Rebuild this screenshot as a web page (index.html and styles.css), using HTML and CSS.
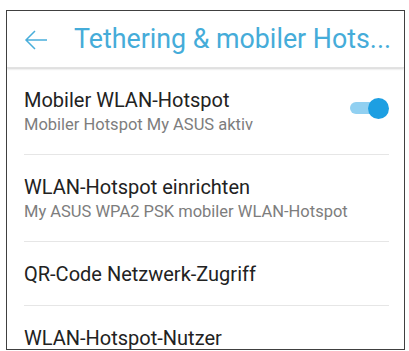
FILE: index.html
```html
<!DOCTYPE html>
<html>
<head>
<meta charset="utf-8">
<link rel="stylesheet" href="styles.css">
</head>
<body>
<div class="frame">
  <header class="appbar">
    <svg class="back" width="24" height="22" viewBox="0 0 24 22">
      <path d="M23 11H2M11 2L2 11L11 20" fill="none" stroke="#49aedb" stroke-width="1.5"/>
    </svg>
    <span class="title">Tethering &amp; mobiler Hots...</span>
  </header>
  <ul class="list">
    <li class="item">
      <div class="texts">
        <div class="primary">Mobiler WLAN-Hotspot</div>
        <div class="secondary">Mobiler Hotspot My ASUS aktiv</div>
      </div>
      <div class="switch"><span class="track"></span><span class="thumb"></span></div>
    </li>
    <li class="item">
      <div class="texts">
        <div class="primary">WLAN-Hotspot einrichten</div>
        <div class="secondary">My ASUS WPA2 PSK mobiler WLAN-Hotspot</div>
      </div>
    </li>
    <li class="item">
      <div class="texts">
        <div class="primary">QR-Code Netzwerk-Zugriff</div>
      </div>
    </li>
    <li class="item">
      <div class="texts">
        <div class="primary">WLAN-Hotspot-Nutzer</div>
      </div>
    </li>
  </ul>
</div>
</body>
</html>
```
FILE: styles.css
```css
html, body {
  margin: 0;
  padding: 0;
  background: #ffffff;
}
body {
  font-family: Roboto, "Noto Sans", sans-serif;
}
.frame {
  margin: 10px 0 0 6px;
  width: 397px;
  height: 338px;
  border: 1.5px solid #404040;
  overflow: hidden;
  background: #fff;
}
.appbar {
  height: 56px;
  display: flex;
  align-items: center;
  padding-left: 17px;
  box-shadow: 0 1px 2px rgba(0,0,0,0.18);
  border-bottom: 1px solid #e2e2e2;
  position: relative;
}
.back {
  flex: none;
  margin-top: 1px;
}
.title {
  margin-left: 26px;
  color: #45acd9;
  font-size: 26.8px;
  white-space: nowrap;
}
.list {
  list-style: none;
  margin: 0;
  padding: 0;
}
.item {
  display: flex;
  align-items: center;
  margin-left: 17px;
  margin-right: 15px;
  padding: 20px 0 19px;
  border-bottom: 1px solid #e6e6e6;
}
.texts {
  flex: 1;
  display: flex;
  flex-direction: column;
  gap: 3px;
}
.primary {
  font-size: 20px;
  line-height: 24px;
  color: #222;
}
.secondary {
  font-size: 16.5px;
  line-height: 20px;
  color: #7d7d7d;
}
.switch {
  position: relative;
  width: 40px;
  height: 22px;
  flex: none;
  margin-bottom: 8px;
}
.track {
  position: absolute;
  left: 1px;
  top: 5px;
  width: 36px;
  height: 12px;
  border-radius: 6px;
  background: #91d0f1;
}
.thumb {
  position: absolute;
  right: 0;
  top: 1px;
  width: 21px;
  height: 21px;
  border-radius: 50%;
  background: #1d9fe2;
}
```
